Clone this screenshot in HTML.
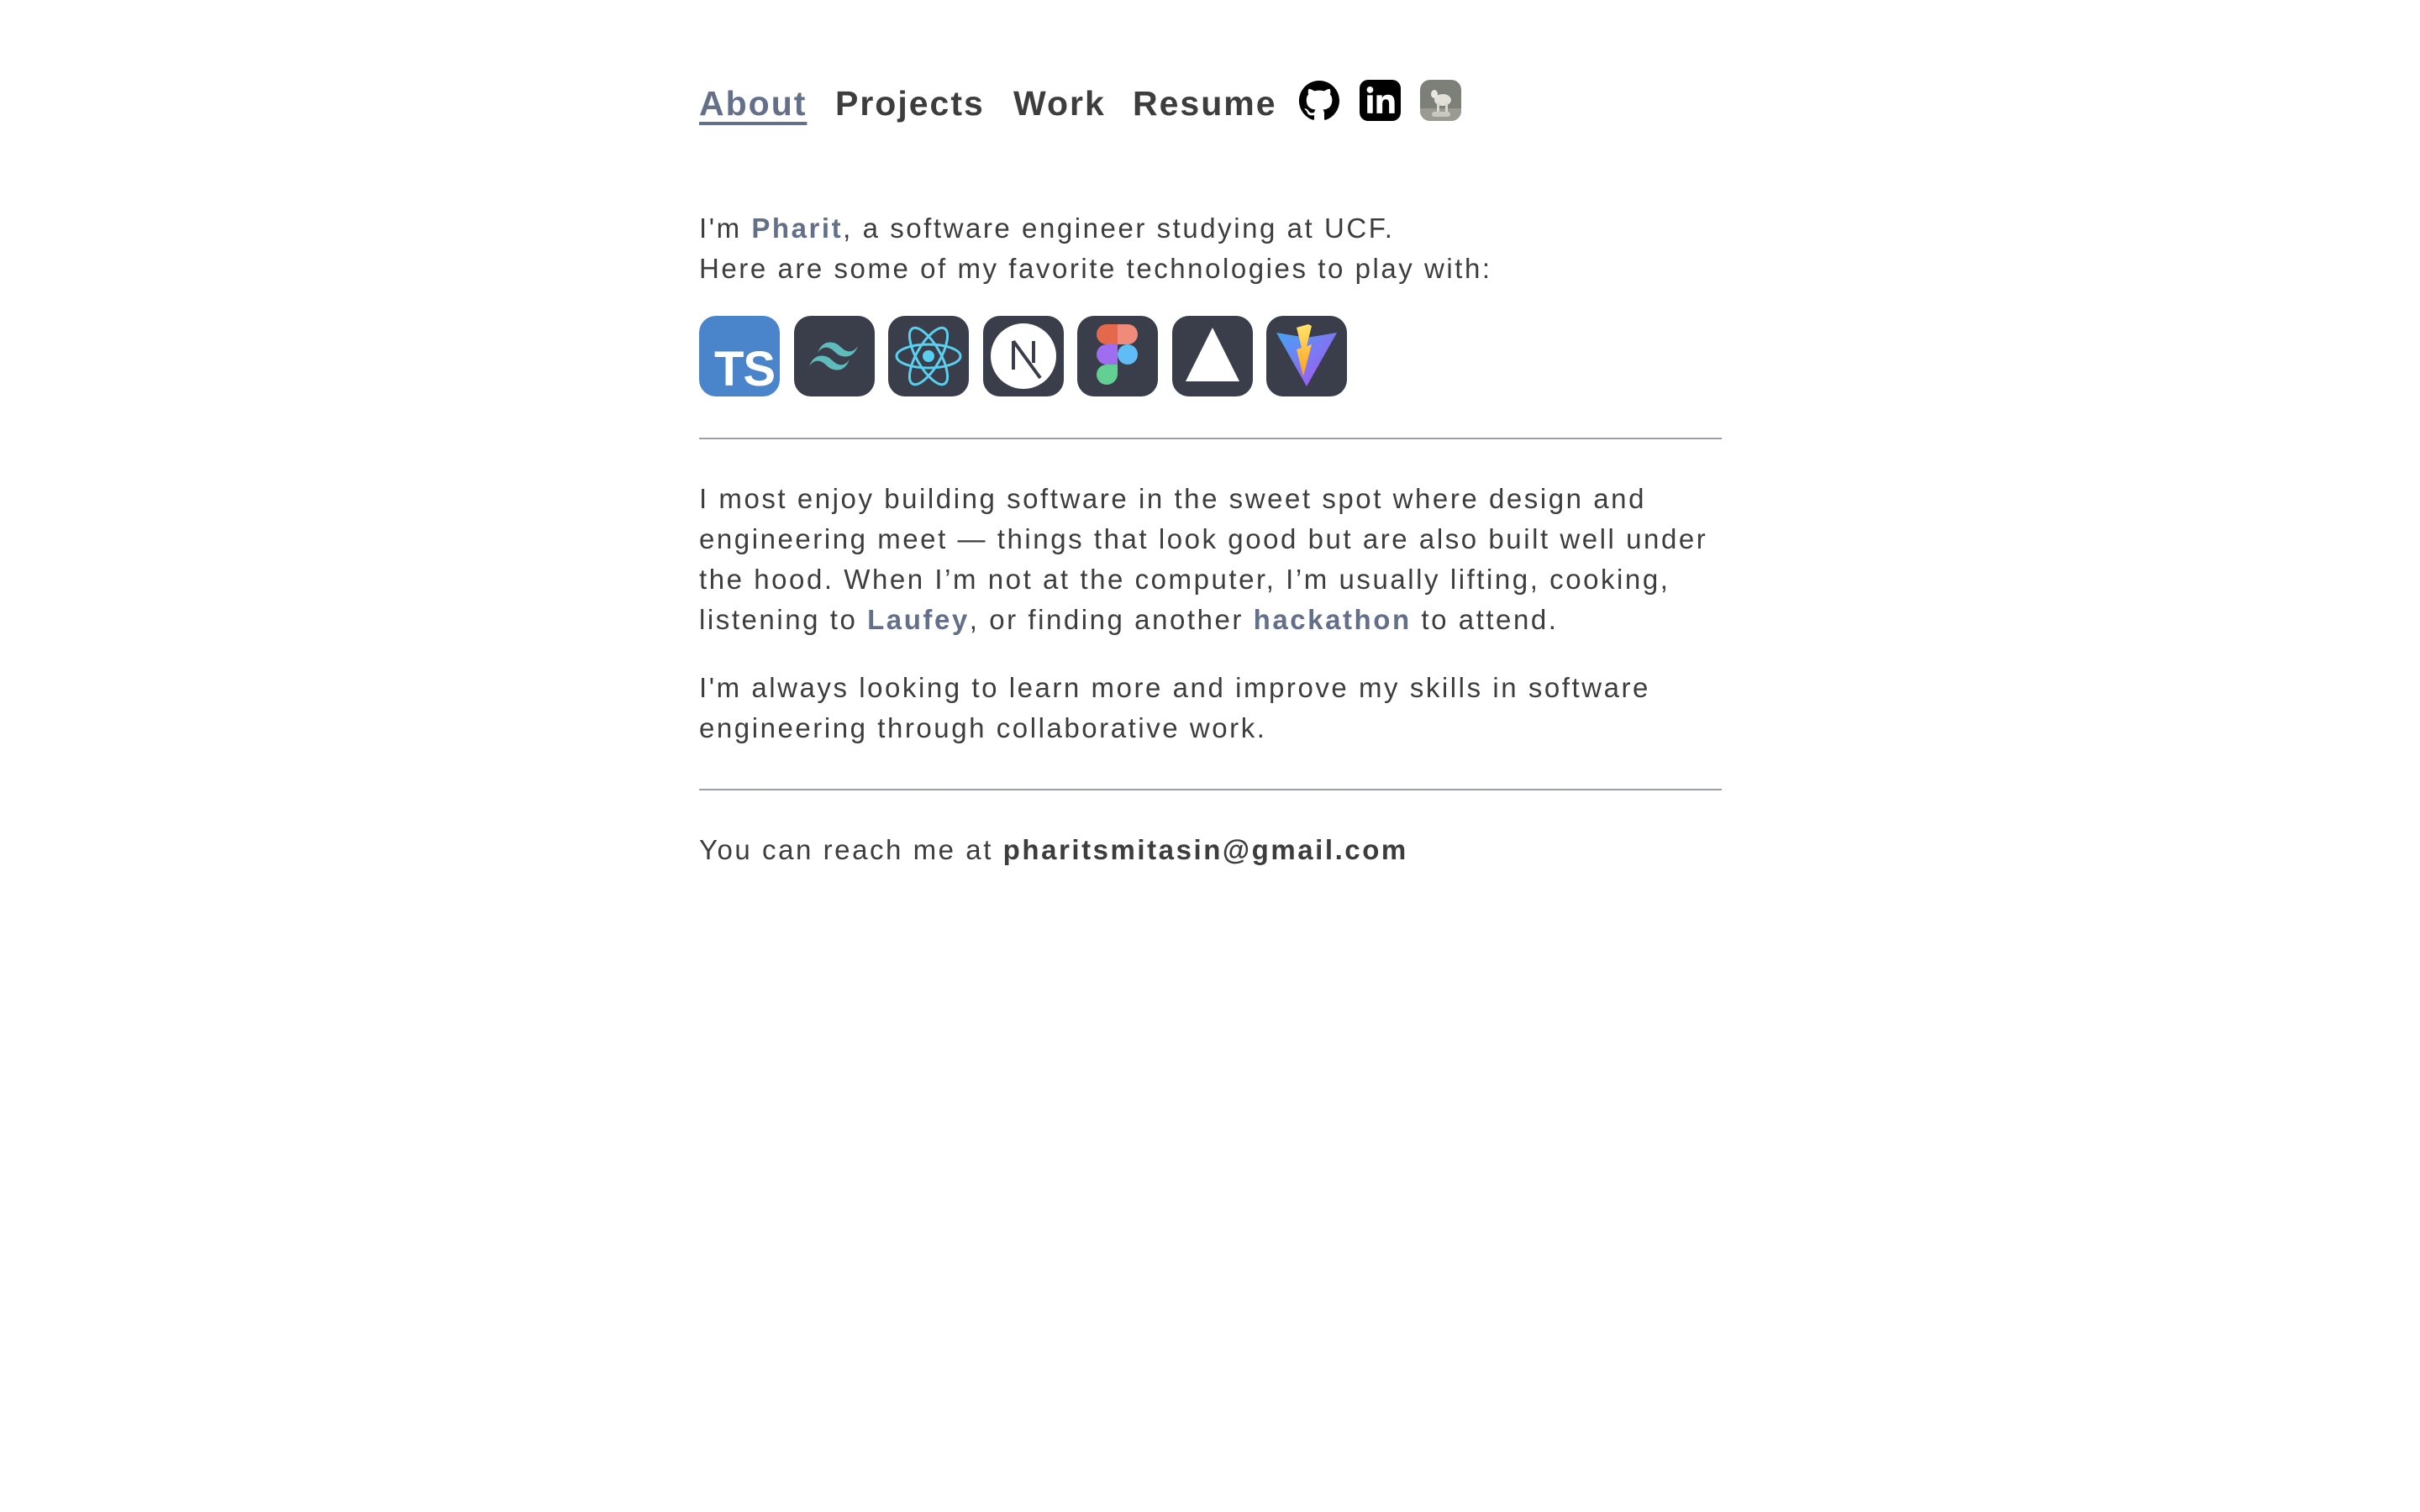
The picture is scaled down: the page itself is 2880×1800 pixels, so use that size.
<!DOCTYPE html>
<html><head><meta charset="utf-8"><style>
html,body{margin:0;padding:0;background:#fff;width:2880px;height:1800px;overflow:hidden}
body{font-family:"Liberation Sans",Arial,sans-serif;color:#3d3d3d}
.a{position:absolute;white-space:nowrap}
.nav{top:100px;font-size:41px;font-weight:bold;letter-spacing:2px;color:#3d3d3d}
.p{font-size:33px;letter-spacing:2.55px;left:832px;line-height:48px}
.l{color:#64708a;font-weight:bold}
.hr{position:absolute;left:832px;width:1217px;height:2px;background:#9aa0aa}
.ic{position:absolute;top:376px;width:96px;height:96px;border-radius:20px;background:#3a3d4a;overflow:hidden}
</style></head><body>
<div class="a nav" style="left:832px;color:#64708a;text-decoration:underline;text-decoration-thickness:4px;text-underline-offset:8px">About</div>
<div class="a nav" style="left:994px">Projects</div>
<div class="a nav" style="left:1206px">Work</div>
<div class="a nav" style="left:1348px">Resume</div>
<svg class="a" style="left:1546px;top:96px" width="48" height="48" viewBox="0 0 16 16"><path fill="#000" d="M8 0C3.58 0 0 3.58 0 8c0 3.54 2.29 6.53 5.47 7.59.4.07.55-.17.55-.38 0-.19-.01-.82-.01-1.49-2.01.37-2.530-.49-2.69-.94-.09-.23-.48-.94-.82-1.130-.28-.15-.68-.52-.01-.53.63-.01 1.08.58 1.23.82.72 1.21 1.87.87 2.33.66.07-.52.28-.87.51-1.07-1.78-.2-3.64-.89-3.64-3.95 0-.87.31-1.59.82-2.15-.08-.2-.36-1.02.08-2.12 0 0 .67-.21 2.2.82.64-.18 1.32-.27 2-.27.68 0 1.36.09 2 .27 1.53-1.04 2.2-.82 2.2-.82.44 1.1.16 1.92.08 2.12.51.56.82 1.27.82 2.15 0 3.07-1.870 3.75-3.65 3.95.29.25.54.73.54 1.48 0 1.07-.01 1.93-.01 2.2 0 .21.15.46.55.38A8.013 8.013 0 0016 8c0-4.42-3.58-8-8-8z"/></svg>
<svg class="a" style="left:1618px;top:95px" width="49" height="49" viewBox="0 0 24 24"><rect width="24" height="24" rx="5" fill="#000"/><rect x="4.5" y="9" width="3.2" height="10.5" fill="#fff"/><circle cx="6.1" cy="5.8" r="1.9" fill="#fff"/><path fill="#fff" d="M10 9h3.1v1.5c.5-.9 1.7-1.8 3.4-1.8 3.3 0 3.9 2.1 3.9 4.9v5.9h-3.2v-5.2c0-1.3-.1-2.9-1.8-2.9s-2.1 1.4-2.1 2.8v5.3H10z"/></svg>
<svg class="a" style="left:1690px;top:95px" width="49" height="49" viewBox="0 0 49 49"><defs><clipPath id="c"><rect width="49" height="49" rx="12"/></clipPath></defs><g clip-path="url(#c)"><rect width="49" height="49" fill="#7d8078"/><rect y="34" width="49" height="15" fill="#9a9a92"/><ellipse cx="27" cy="24" rx="10" ry="7" fill="#e2e0d8"/><rect x="20" y="27" width="3" height="11" fill="#d8d6ce"/><rect x="30" y="27" width="3" height="11" fill="#d8d6ce"/><ellipse cx="17" cy="17" rx="4" ry="5" fill="#e8e6de"/><rect x="14" y="38" width="22" height="6" rx="3" fill="#c8c8c0"/></g></svg>

<div class="a p" style="top:248px">I'm <span class="l">Pharit</span>, a software engineer studying at UCF.<br>Here are some of my favorite technologies to play with:</div>

<div class="ic" style="left:832px;background:#4a85cc"><div style="position:absolute;left:18px;top:30px;font-size:58px;font-weight:bold;color:#fff;letter-spacing:-1px">TS</div></div>
<div class="ic" style="left:944.5px"><svg width="96" height="96" viewBox="0 0 96 96"><path fill="#5fbcbd" d="M28 44c4-10 10-14 19-12 5 1 8 5 12 8 6 4 12 3 17-4-4 10-10 14-19 12-5-1-8-5-12-8-6-4-12-3-17 4zM18 60c4-10 10-14 19-12 5 1 8 5 12 8 6 4 12 3 17-4-4 10-10 14-19 12-5-1-8-5-12-8-6-4-12-3-17 4z"/></svg></div>
<div class="ic" style="left:1057px"><svg width="96" height="96" viewBox="0 0 96 96" fill="none" stroke="#5ad0f0" stroke-width="3"><ellipse cx="48" cy="48" rx="38" ry="14"/><ellipse cx="48" cy="48" rx="38" ry="14" transform="rotate(60 48 48)"/><ellipse cx="48" cy="48" rx="38" ry="14" transform="rotate(120 48 48)"/><circle cx="48" cy="48" r="7" fill="#5ad0f0" stroke="none"/></svg></div>
<div class="ic" style="left:1169.5px"><svg width="96" height="96" viewBox="0 0 96 96"><circle cx="48" cy="48" r="39" fill="#fff"/><path d="M36 30v34M36 30l32 44M60 30v26" stroke="#3a3d4a" stroke-width="4" fill="none"/></svg></div>
<div class="ic" style="left:1282px"><svg width="96" height="96" viewBox="0 0 96 96"><path d="M48 10h-13a12 12 0 0 0 0 24h13z" fill="#e4684a"/><path d="M48 10h12a12 12 0 0 1 0 24h-12z" fill="#f08a7a"/><path d="M48 34h-13a12 12 0 0 0 0 24h13z" fill="#a06df0"/><circle cx="60" cy="46" r="12" fill="#5fbcf5"/><path d="M48 58h-13a12 12 0 0 0 0 24 13 13 0 0 0 13-12z" fill="#62d092"/></svg></div>
<div class="ic" style="left:1394.5px"><svg width="96" height="96" viewBox="0 0 96 96"><path d="M48 14L80 78H16z" fill="#fff"/></svg></div>
<div class="ic" style="left:1507px"><svg width="96" height="96" viewBox="0 0 96 96"><defs><linearGradient id="v" x1="0" y1="0" x2="1" y2="1"><stop offset="0" stop-color="#42a5f5"/><stop offset="1" stop-color="#b44cf0"/></linearGradient><linearGradient id="y" x1="0" y1="0" x2="0" y2="1"><stop offset="0" stop-color="#ffe46a"/><stop offset="1" stop-color="#ff9f1a"/></linearGradient></defs><path d="M12 20l36 6 36-6-36 64z" fill="url(#v)"/><path d="M50 10l-14 4 6 24-6 2 8 32 10-38-6 2 6-24z" fill="url(#y)"/></svg></div>

<div class="hr" style="top:521px"></div>
<div class="a p" style="top:570px">I most enjoy building software in the sweet spot where design and<br>engineering meet — things that look good but are also built well under<br>the hood. When I’m not at the computer, I’m usually lifting, cooking,<br>listening to <span class="l">Laufey</span>, or finding another <span class="l">hackathon</span> to attend.</div>
<div class="a p" style="top:795px">I'm always looking to learn more and improve my skills in software<br>engineering through collaborative work.</div>
<div class="hr" style="top:939px"></div>
<div class="a p" style="top:988px">You can reach me at <b>pharitsmitasin@gmail.com</b></div>
</body></html>
